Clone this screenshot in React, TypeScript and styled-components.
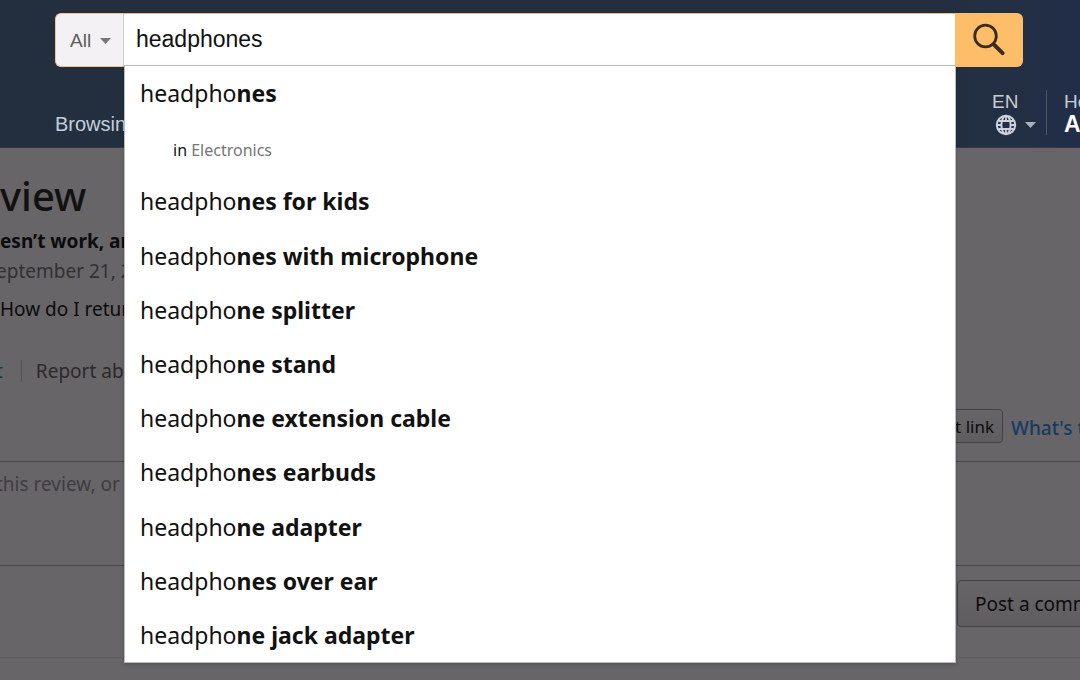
import React, { useState } from "react";
import styled, { createGlobalStyle } from "styled-components";

const sans = `"Liberation Sans", Arial, sans-serif`;
const ember = `"Noto Sans", "Open Sans", sans-serif`;

const GlobalStyle = createGlobalStyle`
  *, *::before, *::after { box-sizing: border-box; }
  body { margin: 0; background: #676568; font-family: ${ember}; color: #111; }
  h1, p, ul { margin: 0; padding: 0; }
  button, input, select, textarea { font: inherit; color: inherit; margin: 0; }
`;

const Page = styled.div`
  min-height: 100vh;
  overflow: hidden;
`;

const Header = styled.header`
  background: linear-gradient(90deg, #232f3e 0%, #232f3e 85%, #222e48 100%);
  border-bottom: 1px solid #35394a;
  padding-top: 13px;
  font-family: ${sans};
`;

const SearchForm = styled.form`
  position: relative;
  display: flex;
  height: 54px;
  margin: 0 57px 0 55px;
`;

const Scope = styled.label`
  position: relative;
  display: flex;
  width: 69px;
  flex: none;
  background: #f3f1f3;
  border: 1px solid #f0c48c;
  border-right-color: #cfcdd0;
  border-radius: 6px 0 0 6px;
  overflow: hidden;

  svg {
    position: absolute;
    right: 12px;
    top: 24px;
    pointer-events: none;
  }
`;

const ScopeSelect = styled.select`
  appearance: none;
  width: 100%;
  border: 0;
  background: transparent;
  padding: 0 0 0 14px;
  font-size: 19px;
  color: #5c5c5c;
  outline: none;
`;

const SearchInput = styled.input`
  flex: 1;
  min-width: 0;
  border: 0;
  border-top: 1px solid #f0b97c;
  border-radius: 0;
  background: #fff;
  padding: 0 12px 2px;
  font-size: 23px;
  color: #111;
  outline: none;
`;

const SearchButton = styled.button`
  width: 68px;
  flex: none;
  border: 0;
  border-radius: 0 6px 6px 0;
  background: #febd69;
  padding: 0;
  display: flex;
  align-items: center;
  justify-content: center;
`;

const Suggestions = styled.ul`
  position: absolute;
  z-index: 2;
  left: 69px;
  right: 67px;
  top: 52px;
  min-height: 598px;
  display: flex;
  flex-direction: column;
  list-style: none;
  background: #fff;
  border: 1px solid #bbb;
  box-shadow: 0 2px 4px rgba(0, 0, 0, 0.2);
  font-family: ${ember};
`;

const Suggestion = styled.li<{ $nested?: boolean }>`
  flex: 1 0 54px;
  display: flex;
  align-items: center;
  padding: ${(p) => (p.$nested ? "6px 16px 0 48px" : "0 15px")};
  font-size: ${(p) => (p.$nested ? "16px" : "23px")};
  line-height: 30px;
  color: #111;
  white-space: pre;
`;

const Department = styled.span`
  color: #767676;
`;

const NavRow = styled.div`
  display: flex;
  justify-content: space-between;
  height: 80px;
`;

const NavLink = styled.a`
  margin: 45px 0 0 55px;
  font-size: 20px;
  line-height: 24px;
  color: #c5cede;
  text-decoration: none;
`;

const NavTools = styled.div`
  display: flex;
  align-items: flex-start;
  width: 88px;
  padding-top: 23px;
`;

const Language = styled.button`
  flex: none;
  width: 55px;
  height: 45px;
  padding: 0;
  border: 0;
  border-right: 1px solid #4a5464;
  background: none;
  font-size: 19px;
  line-height: 24px;
  text-align: left;
  color: #c8ccd2;
`;

const LanguageIcons = styled.span`
  display: flex;
  align-items: center;
  gap: 8px;
  padding-left: 3px;
  height: 22px;
`;

const Account = styled.a`
  display: flex;
  flex-direction: column;
  padding-left: 17px;
  font-size: 19px;
  line-height: 23px;
  color: #c8ccd2;
  text-decoration: none;

  strong {
    font-size: 23px;
    line-height: 22px;
    color: #fff;
  }
`;

const Title = styled.h1`
  padding-top: 20px;
  font-size: 40px;
  line-height: 56px;
  font-weight: 500;
`;

const Line = styled.p<{ $tone?: "bold" | "muted" }>`
  margin-left: ${(p) => (p.$tone === "muted" ? "-4px" : "0")};
  font-size: 19px;
  line-height: 30px;
  white-space: nowrap;
  font-weight: ${(p) => (p.$tone === "bold" ? 700 : 400)};
  color: ${(p) => (p.$tone === "muted" ? "#323033" : "#0c0b0c")};
`;

const Intro = styled.div`
  padding-top: 2px;
`;

const Body = styled.div`
  padding: 8px 0 32px;
`;

const Actions = styled.div`
  display: flex;
  align-items: center;
  height: 30px;
  margin-left: -4px;
  font-size: 19px;
`;

const ActionLink = styled.a<{ $blue?: boolean }>`
  color: ${(p) => (p.$blue ? "#12395a" : "#2b292c")};
  text-decoration: none;
  white-space: nowrap;
`;

const Divider = styled.span`
  width: 1px;
  height: 22px;
  margin: 0 14px 0 18px;
  background: #545255;
`;

const Tools = styled.div`
  display: flex;
  align-items: center;
  justify-content: flex-end;
  gap: 8px;
  margin-top: 23px;
  height: 34px;
  font-size: 19px;
`;

const HelpLink = styled.a`
  width: 69px;
  padding-top: 3px;
  overflow: hidden;
  white-space: nowrap;
  font-weight: 500;
  color: #163a63;
  text-decoration: none;
`;

const BoxButton = styled.button<{ $large?: boolean }>`
  height: ${(p) => (p.$large ? "47px" : "34px")};
  padding: ${(p) => (p.$large ? "0 17px" : "0 8px")};
  border: 1px solid #444245;
  border-radius: 4px;
  background: linear-gradient(#676568, #5f5d60);
  font-size: ${(p) => (p.$large ? "19px" : "17px")};
  white-space: nowrap;
  color: #0c0b0c;
`;

const Comment = styled.textarea`
  display: block;
  width: calc(100% + 4px);
  height: 105px;
  margin: 18px 0 0 -4px;
  padding: 7px 0;
  border: solid #49474a;
  border-width: 1px 0;
  border-radius: 0;
  background: transparent;
  resize: none;
  font-size: 19px;
  line-height: 30px;
  outline: none;

  &::placeholder {
    color: #3f3d40;
    opacity: 1;
  }
`;

const PostRow = styled.div`
  display: flex;
  justify-content: flex-end;
  padding: 14px 0 30px;
  border-bottom: 1px solid #605e61;
`;

const PostSlot = styled.div`
  width: 123px;
`;

const suggestions: [string, string][] = [
  ["headpho", "nes for kids"],
  ["headpho", "nes with microphone"],
  ["headpho", "ne splitter"],
  ["headpho", "ne stand"],
  ["headpho", "ne extension cable"],
  ["headpho", "nes earbuds"],
  ["headpho", "ne adapter"],
  ["headpho", "nes over ear"],
  ["headpho", "ne jack adapter"],
];

const Caret = ({ color }: { color: string }) => (
  <svg width="11" height="6" viewBox="0 0 11 6" aria-hidden="true">
    <path d="M0 0h11L5.5 6z" fill={color} />
  </svg>
);

const SearchIcon = () => (
  <svg width="34" height="34" viewBox="0 0 34 34" fill="none" stroke="#3a2c1c" aria-hidden="true">
    <circle cx="13.5" cy="13" r="10.8" strokeWidth="2.8" />
    <path d="M21 20.6l2.4 2.4" strokeWidth="3.4" />
    <path d="M23 22.6l7.6 7.6" strokeWidth="4" strokeLinecap="round" />
  </svg>
);

const GlobeIcon = () => (
  <svg width="22" height="22" viewBox="0 0 22 22" fill="none" stroke="#cdd3dc" strokeWidth="2" aria-hidden="true">
    <circle cx="11" cy="11" r="9.2" />
    <ellipse cx="11" cy="11" rx="4.6" ry="9.2" />
    <path d="M11 2v5M11 15v5M2 11h5M15 11h5M3.4 7h15.2M3.4 15h15.2" strokeWidth="1.8" />
  </svg>
);

export default function App() {
  const [query, setQuery] = useState("headphones");
  return (
    <Page>
      <GlobalStyle />
      <Header>
        <SearchForm role="search" onSubmit={(e) => e.preventDefault()}>
          <Scope>
            <ScopeSelect aria-label="Department">
              <option>All</option>
            </ScopeSelect>
            <Caret color="#777" />
          </Scope>
          <SearchInput aria-label="Search" value={query} onChange={(e) => setQuery(e.target.value)} />
          <SearchButton type="submit" aria-label="Go">
            <SearchIcon />
          </SearchButton>
          <Suggestions>
            <Suggestion>
              headpho<b>nes</b>
            </Suggestion>
            <Suggestion $nested>
              in <Department>Electronics</Department>
            </Suggestion>
            {suggestions.map(([typed, rest]) => (
              <Suggestion key={rest}>
                {typed}
                <b>{rest}</b>
              </Suggestion>
            ))}
          </Suggestions>
        </SearchForm>
        <NavRow>
          <NavLink href="#history">Browsin</NavLink>
          <NavTools>
            <Language type="button">
              EN
              <LanguageIcons>
                <GlobeIcon />
                <Caret color="#a7b1c2" />
              </LanguageIcons>
            </Language>
            <Account href="#account">
              <span>Hello</span>
              <strong>Account</strong>
            </Account>
          </NavTools>
        </NavRow>
      </Header>
      <main>
        <Title>view</Title>
        <Intro>
          <Line $tone="bold">esn’t work, an</Line>
          <Line $tone="muted">eptember 21, 2</Line>
        </Intro>
        <Body>
          <Line>How do I retur</Line>
        </Body>
        <Actions>
          <ActionLink href="#comment" $blue>
            t
          </ActionLink>
          <Divider />
          <ActionLink href="#report">Report ab</ActionLink>
        </Actions>
        <Tools>
          <BoxButton type="button">t link</BoxButton>
          <HelpLink href="#help">What's this?</HelpLink>
        </Tools>
        <Comment aria-label="Comment" placeholder="this review, or" />
        <PostRow>
          <PostSlot>
            <BoxButton type="button" $large>
              Post a comment
            </BoxButton>
          </PostSlot>
        </PostRow>
      </main>
    </Page>
  );
}
